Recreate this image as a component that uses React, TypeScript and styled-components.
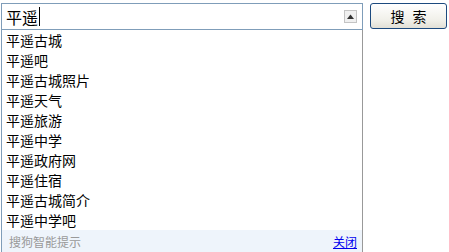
import React from "react";
import styled, { createGlobalStyle } from "styled-components";

const GlobalStyle = createGlobalStyle`
  html, body {
    margin: 0;
    padding: 0;
    background: #ffffff;
    font-family: "SimSun", "Noto Sans CJK SC", sans-serif;
  }
`;

const suggestions = [
  "平遥古城",
  "平遥吧",
  "平遥古城照片",
  "平遥天气",
  "平遥旅游",
  "平遥中学",
  "平遥政府网",
  "平遥住宿",
  "平遥古城简介",
  "平遥中学吧",
];

const App = () => {
  return (
    <>
      <GlobalStyle />
      <Page>
        <SearchColumn>
          <InputBox>
            <InputText>平遥</InputText>
            <Caret />
            <Spacer />
            <CollapseIcon>
              <svg width="7" height="5" viewBox="0 0 7 5">
                <path d="M0 5 L3.5 0.5 L7 5 Z" fill="#333" />
              </svg>
            </CollapseIcon>
          </InputBox>
          <Dropdown>
            {suggestions.map((s) => (
              <Item key={s}>{s}</Item>
            ))}
            <Footer>
              <Hint>搜狗智能提示</Hint>
              <CloseLink href="#">关闭</CloseLink>
            </Footer>
          </Dropdown>
        </SearchColumn>
        <SearchButton>搜索</SearchButton>
      </Page>
    </>
  );
};

export default App;

const Page = styled.div`
  display: flex;
  align-items: flex-start;
  padding: 3px 0 0 1px;
`;

const SearchColumn = styled.div`
  width: 362px;
  display: flex;
  flex-direction: column;
`;

const InputBox = styled.div`
  height: 25px;
  border: 1px solid #7f9db9;
  display: flex;
  align-items: center;
  padding: 0 5px 0 4px;
  background: #fff;
`;

const InputText = styled.span`
  font-size: 16px;
  line-height: 20px;
  color: #000;
`;

const Caret = styled.span`
  width: 1px;
  height: 19px;
  background: #000;
  margin-left: 1px;
`;

const Spacer = styled.div`
  flex: 1;
`;

const CollapseIcon = styled.div`
  width: 11px;
  height: 11px;
  border: 1px solid #c4c4c4;
  background: #f0f0f0;
  display: flex;
  align-items: center;
  justify-content: center;
`;

const Dropdown = styled.div`
  border-left: 1px solid #7f9db9;
  border-right: 1px solid #999;
  display: flex;
  flex-direction: column;
`;

const Item = styled.div`
  height: 20px;
  line-height: 20px;
  padding-left: 4px;
  font-size: 14px;
  color: #000;
`;

const Footer = styled.div`
  height: 22px;
  background: #eef4fb;
  display: flex;
  align-items: center;
  justify-content: space-between;
  padding: 0 5px 0 7px;
  font-size: 12px;
`;

const Hint = styled.span`
  color: #999;
`;

const CloseLink = styled.a`
  color: #0000ee;
  text-decoration: underline;
`;

const SearchButton = styled.button`
  margin-left: 7px;
  width: 77px;
  height: 26px;
  border: 1px solid #1c4a7e;
  border-radius: 3px;
  background: linear-gradient(#ffffff, #f0efe8 70%, #e2e0d6);
  font-family: "SimSun", "Noto Sans CJK SC", sans-serif;
  font-size: 14px;
  letter-spacing: 8px;
  text-indent: 8px;
  color: #000;
  padding: 0;
  cursor: pointer;
`;
